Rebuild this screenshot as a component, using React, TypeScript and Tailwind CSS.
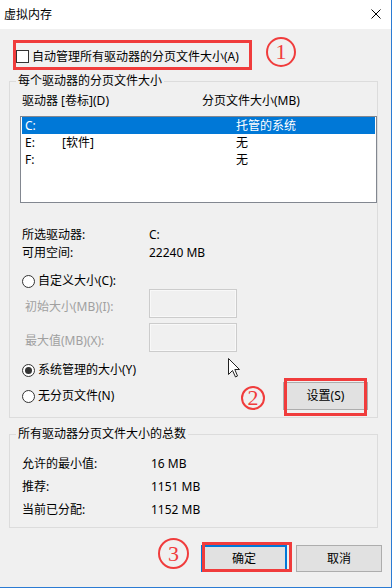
import React from 'react';

const font = { fontFamily: '"Noto Sans", "Noto Sans CJK SC", sans-serif' };

function Radio({ checked, label }: { checked?: boolean; label: string }) {
  return (
    <div className="flex items-center h-[16px] pl-[2px]">
      <span className="w-[13px] h-[13px] rounded-full border border-[#333333] bg-white flex items-center justify-center">
        {checked && <span className="w-[7px] h-[7px] rounded-full bg-[#333333]"></span>}
      </span>
      <span className="ml-[3px] leading-[16px]">{label}</span>
    </div>
  );
}

function Badge({ n, className }: { n: string; className: string }) {
  return (
    <div
      className={`absolute rounded-full border-2 border-[#f03c3c] flex items-center justify-center text-[#f03c3c] text-[22px] leading-none ${className}`}
      style={{ fontFamily: '"Liberation Serif", serif' }}
    >
      {n}
    </div>
  );
}

export default function App() {
  const drives = [
    { d: 'C:', label: '', size: '托管的系统', selected: true },
    { d: 'E:', label: '[软件]', size: '无' },
    { d: 'F:', label: '', size: '无' },
  ];

  return (
    <div
      className="relative w-[392px] h-[588px] bg-[#f0f0f0] border-r border-b border-[#2b7bd3] overflow-hidden text-[12px] text-black"
      style={font}
    >
      {/* title bar */}
      <div className="h-[29px] bg-white flex items-center justify-between pl-[4px] pr-[10px]">
        <span className="leading-[16px]">虚拟内存</span>
        <svg width="10" height="10" viewBox="0 0 10 10" className="mt-[-1px]">
          <path d="M0.5 0.5 L9.5 9.5 M9.5 0.5 L0.5 9.5" stroke="#000" strokeWidth="1" />
        </svg>
      </div>

      <div className="pl-[9px] pr-[13px]">
        {/* auto manage */}
        <div className="mt-[19px] h-[17px] flex items-center pl-[7px]">
          <span className="w-[13px] h-[13px] border border-[#333333] bg-white"></span>
          <span className="ml-[3px] leading-[17px]">自动管理所有驱动器的分页文件大小(A)</span>
        </div>

        {/* per drive */}
        <fieldset className="mt-[8px] border border-[#dcdcdc] px-0">
          <legend className="ml-[6px] px-[2px] leading-[16px]">每个驱动器的分页文件大小</legend>
          <div className="pl-[10px] pb-[7px]">
            <div className="mt-[4px] h-[16px] flex leading-[16px] pl-[2px]">
              <span className="w-[180px]">驱动器 [卷标](D)</span>
              <span>分页文件大小(MB)</span>
            </div>

            <div className="mt-[7px] h-[87px] border border-[#828790] bg-white px-[1px]">
              {drives.map((r) => (
                <div
                  key={r.d}
                  className={`h-[17px] flex items-center pl-[3px] leading-[17px] ${
                    r.selected ? 'bg-[#0078d7] text-white' : ''
                  }`}
                >
                  <span className="w-[37px]">{r.d}</span>
                  <span className="w-[174px]">{r.label}</span>
                  <span>{r.size}</span>
                </div>
              ))}
            </div>

            <div className="mt-[23px] pl-[2px]">
              <div className="h-[18px] flex items-center">
                <span className="w-[127px]">所选驱动器:</span>
                <span>C:</span>
              </div>
              <div className="h-[18px] flex items-center">
                <span className="w-[127px]">可用空间:</span>
                <span>22240 MB</span>
              </div>
            </div>

            <div className="mt-[11px]">
              <Radio label="自定义大小(C):" />
            </div>

            <div className="pl-[2px] text-[#a0a0a0]">
              <div className="h-[29px] flex items-center">
                <span className="w-[127px] pl-[3px] pt-[7px]">初始大小(MB)(I):</span>
                <span className="w-[88px] h-[29px] border border-[#cccccc] bg-[#f0f0f0] shadow-[inset_0_0_0_1px_#f8f8f8]"></span>
              </div>
              <div className="mt-[5px] h-[29px] flex items-center">
                <span className="w-[127px] pl-[3px] pt-[7px]">最大值(MB)(X):</span>
                <span className="w-[88px] h-[29px] border border-[#cccccc] bg-[#f0f0f0] shadow-[inset_0_0_0_1px_#f8f8f8]"></span>
              </div>
            </div>

            <div className="mt-[10px]">
              <Radio checked label="系统管理的大小(Y)" />
            </div>

            <div className="mt-[4px] h-[28px] flex items-center justify-between pr-[9px]">
              <Radio label="无分页文件(N)" />
              <button className="w-[85px] h-[28px] bg-[#e1e1e1] border border-[#adadad] leading-[16px]">
                设置(S)
              </button>
            </div>
          </div>
        </fieldset>

        {/* totals */}
        <fieldset className="mt-[8px] border border-[#dcdcdc] px-0">
          <legend className="ml-[6px] px-[2px] leading-[16px]">所有驱动器分页文件大小的总数</legend>
          <div className="pl-[12px] pb-[6px] mt-[10px]">
            {[
              ['允许的最小值:', '16 MB'],
              ['推荐:', '1151 MB'],
              ['当前已分配:', '1152 MB'],
            ].map(([k, v]) => (
              <div key={k} className="h-[23px] flex items-center">
                <span className="w-[129px]">{k}</span>
                <span>{v}</span>
              </div>
            ))}
          </div>
        </fieldset>

        {/* dialog buttons */}
        <div className="mt-[17px] mr-[-4px] flex justify-end gap-[9px]">
          <button className="w-[86px] h-[27px] bg-[#e1e1e1] border-2 border-[#0078d7] leading-[16px]">确定</button>
          <button className="w-[86px] h-[27px] bg-[#e1e1e1] border border-[#adadad] leading-[16px]">取消</button>
        </div>
      </div>

      {/* annotations */}
      <div className="absolute left-[13px] top-[40px] w-[239px] h-[30px] border-[3px] border-[#f03c3c]"></div>
      <Badge n="1" className="left-[266px] top-[37px] w-[30px] h-[30px]" />

      <div className="absolute left-[284px] top-[378px] w-[83px] h-[38px] border-[3px] border-[#f03c3c]"></div>
      <Badge n="2" className="left-[241px] top-[386px] w-[24px] h-[24px]" />

      <div className="absolute left-[202px] top-[542px] w-[90px] h-[30px] border-[3px] border-[#f03c3c]"></div>
      <Badge n="3" className="left-[158px] top-[538px] w-[31px] h-[31px]" />

      <svg className="absolute left-[228px] top-[358px]" width="13" height="20" viewBox="0 0 13 20">
        <path
          d="M0.5 0.5 L0.5 16.5 L4.5 12.5 L7.5 19 L9.5 18 L6.8 11.5 L11.5 11.5 Z"
          fill="#fff"
          stroke="#222"
          strokeWidth="1"
          strokeLinejoin="round"
        />
      </svg>
    </div>
  );
}
